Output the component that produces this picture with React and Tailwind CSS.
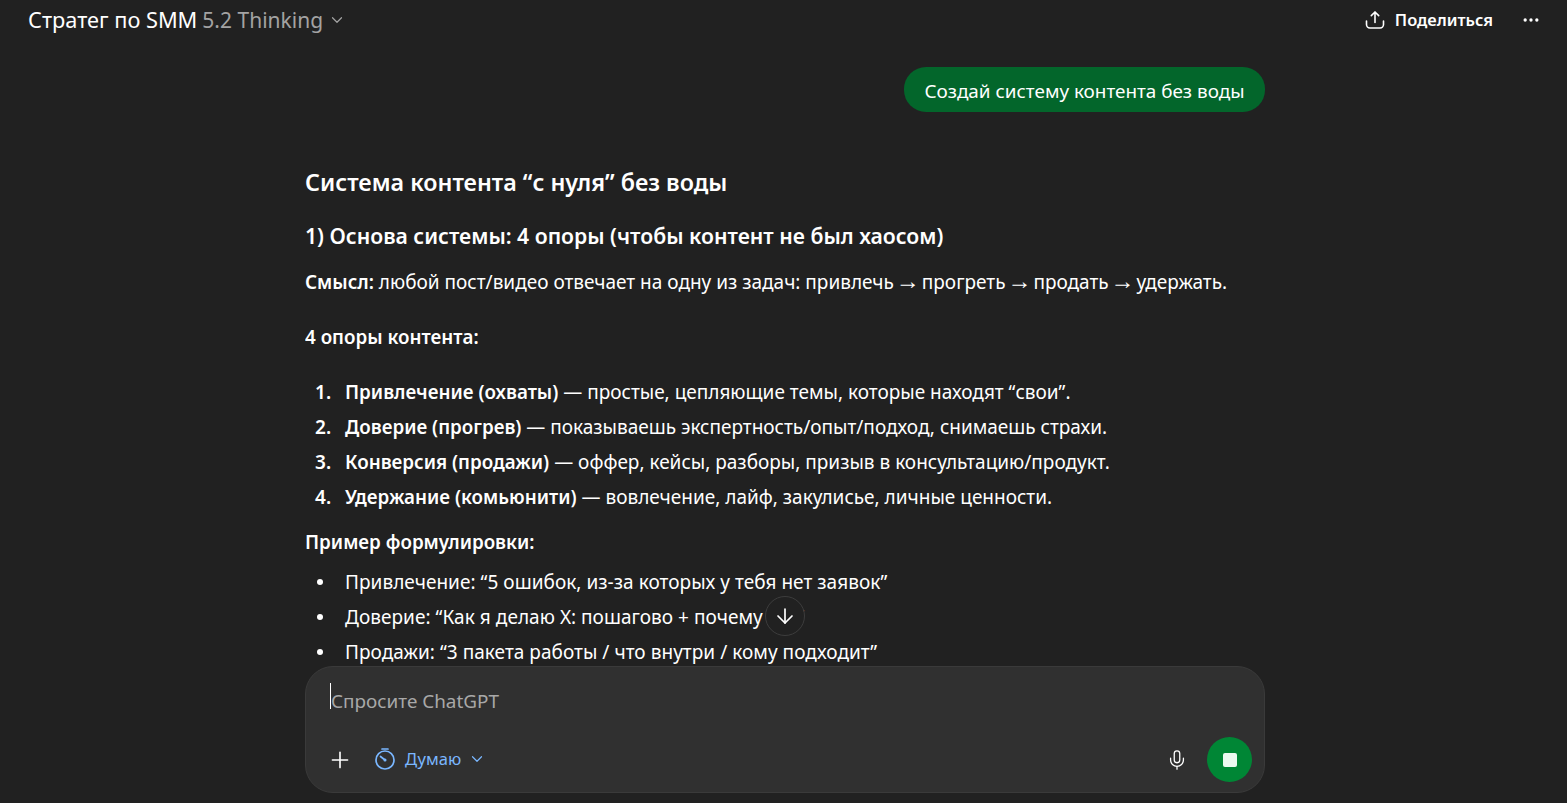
import React from 'react';
import { Plus, Mic, ChevronDown, ArrowDown, Ellipsis } from 'lucide-react';

const pillars = [
    ['Привлечение (охваты)', ' — простые, цепляющие темы, которые находят “свои”.'],
    ['Доверие (прогрев)', ' — показываешь экспертность/опыт/подход, снимаешь страхи.'],
    ['Конверсия (продажи)', ' — оффер, кейсы, разборы, призыв в консультацию/продукт.'],
    ['Удержание (комьюнити)', ' — вовлечение, лайф, закулисье, личные ценности.'],
];

const examples = [
    'Привлечение: “5 ошибок, из-за которых у тебя нет заявок”',
    'Доверие: “Как я делаю Х: пошагово + почему так”',
    'Продажи: “3 пакета работы / что внутри / кому подходит”',
];

const ShareIcon = () => (
    <svg width="20" height="20" viewBox="0 0 20 20" fill="none" stroke="currentColor" strokeWidth="1.6" strokeLinecap="round" strokeLinejoin="round">
        <path d="M10 12.5V2.2" />
        <path d="M6.3 5.6 10 2l3.7 3.6" />
        <path d="M1.5 11v3.6A3.4 3.4 0 0 0 4.9 18h10.2a3.4 3.4 0 0 0 3.4-3.4V11" />
    </svg>
);

const ThinkIcon = () => (
    <svg width="22" height="24" viewBox="0 0 22 24" fill="none" stroke="currentColor" strokeWidth="1.7" strokeLinecap="round">
        <path d="M8 2h6" />
        <circle cx="11" cy="13" r="9" />
        <path d="M6.5 9.5l4.5 3.5" />
        <circle cx="11" cy="13" r="0.7" />
    </svg>
);

const Arrow = () => <span className="font-['Liberation_Sans',sans-serif] text-[24px] leading-none -mx-[3px]">→</span>;

const Header = () => (
    <header className="h-[40px] shrink-0 flex items-center justify-between pl-[28px] pr-[26px]">
        <div className="flex items-center leading-[40px]">
            <span className="text-white text-[21.75px]">Стратег по SMM</span>
            <span className="text-[#a3a3a3] ml-[5px] text-[21px]">5.2 Thinking</span>
            <ChevronDown className="w-[18px] h-[18px] ml-[5px] text-[#a3a3a3]" strokeWidth={1.6} />
        </div>
        <div className="flex items-center text-white">
            <ShareIcon />
            <span className="ml-[10px] text-[16.45px] font-semibold">Поделиться</span>
            <Ellipsis className="w-[20px] h-[20px] ml-[28px]" />
        </div>
    </header>
);

const Composer = () => (
    <div className="shrink-0 h-[137px] ml-[305px] w-[960px]">
        <div className="h-[127px] rounded-[28px] bg-[#303030] border border-[#3a3a3a] flex flex-col">
            <div className="h-[70px] pl-[24px] pt-[16px] flex items-start">
                <span className="w-px h-[26px] bg-white" />
                <span className="text-[#a8a8a8] text-[18.9px] leading-[36px]">Спросите ChatGPT</span>
            </div>
            <div className="flex-1 flex items-center justify-between pl-[21px] pr-[12px] pb-[10px]">
                <div className="flex items-center">
                    <Plus className="w-[26px] h-[26px] text-white" strokeWidth={1.5} />
                    <span className="ml-[21px] text-[#7ab7ff] flex items-center">
                        <ThinkIcon />
                        <span className="ml-[9px] text-[16.6px]">Думаю</span>
                        <ChevronDown className="w-[18px] h-[18px] ml-[7px]" strokeWidth={1.6} />
                    </span>
                </div>
                <div className="flex items-center">
                    <Mic className="w-[22px] h-[24px] text-white" strokeWidth={1.4} />
                    <div className="ml-[19px] w-[45px] h-[45px] rounded-full bg-[#008635] flex items-center justify-center">
                        <div className="w-[14px] h-[14px] rounded-[2px] bg-[#ecf9f1]" />
                    </div>
                </div>
            </div>
        </div>
    </div>
);

export default function App() {
    return (
        <div className="relative h-screen overflow-hidden bg-[#212121] text-white flex flex-col font-['Noto_Sans',sans-serif]">
            <Header />

            <main className="flex-1 min-h-0 overflow-hidden ml-[305px] w-[960px] pt-[27px]">
                <div className="flex justify-end">
                    <div className="h-[45px] px-[20.5px] rounded-[22px] bg-[#03662b] text-[18.9px] leading-[48px]">
                        Создай систему контента без воды
                    </div>
                </div>

                <h2 className="mt-[54px] text-[23.3px] leading-[32px] font-semibold">Система контента “с нуля” без воды</h2>
                <h3 className="mt-[23px] text-[21.2px] leading-[30px] font-semibold">1) Основа системы: 4 опоры (чтобы контент не был хаосом)</h3>
                <p className="mt-[17px] h-[28px] text-[19px] leading-[28px]">
                    <b className="font-semibold text-[18.8px]">Смысл:</b> любой пост/видео отвечает на одну из задач: привлечь <Arrow /> прогреть <Arrow /> продать <Arrow /> удержать.
                </p>
                <p className="mt-[27px] text-[18.8px] leading-[28px] font-semibold">4 опоры контента:</p>

                <ol className="mt-[27px] text-[19px] leading-[28px] flex flex-col gap-[7px]">
                    {pillars.map(([title, text], i) => (
                        <li key={title} className="flex">
                            <span className="w-[40px] pl-[10px] shrink-0 font-semibold">{i + 1}.</span>
                            <span>
                                <b className="font-semibold text-[18.8px]">{title}</b>{text}
                            </span>
                        </li>
                    ))}
                </ol>

                <p className="mt-[17px] text-[18.8px] leading-[28px] font-semibold">Пример формулировки:</p>

                <ul className="mt-[12px] text-[19px] leading-[28px] tracking-[0.04px] flex flex-col gap-[7px]">
                    {examples.map((item) => (
                        <li key={item} className="flex items-center">
                            <span className="w-[40px] pl-[12px] shrink-0">
                                <span className="block w-[6px] h-[6px] rounded-full bg-white" />
                            </span>
                            <span>{item}</span>
                        </li>
                    ))}
                </ul>
            </main>

            <Composer />

            {/* кнопка прокрутки вниз */}
            <button className="absolute left-[765px] top-[596px] w-[40px] h-[40px] rounded-full bg-[#212121] border border-[#3d3d3d] flex items-center justify-center">
                <ArrowDown className="w-[24px] h-[24px] text-white" strokeWidth={1.7} />
            </button>
        </div>
    );
}
